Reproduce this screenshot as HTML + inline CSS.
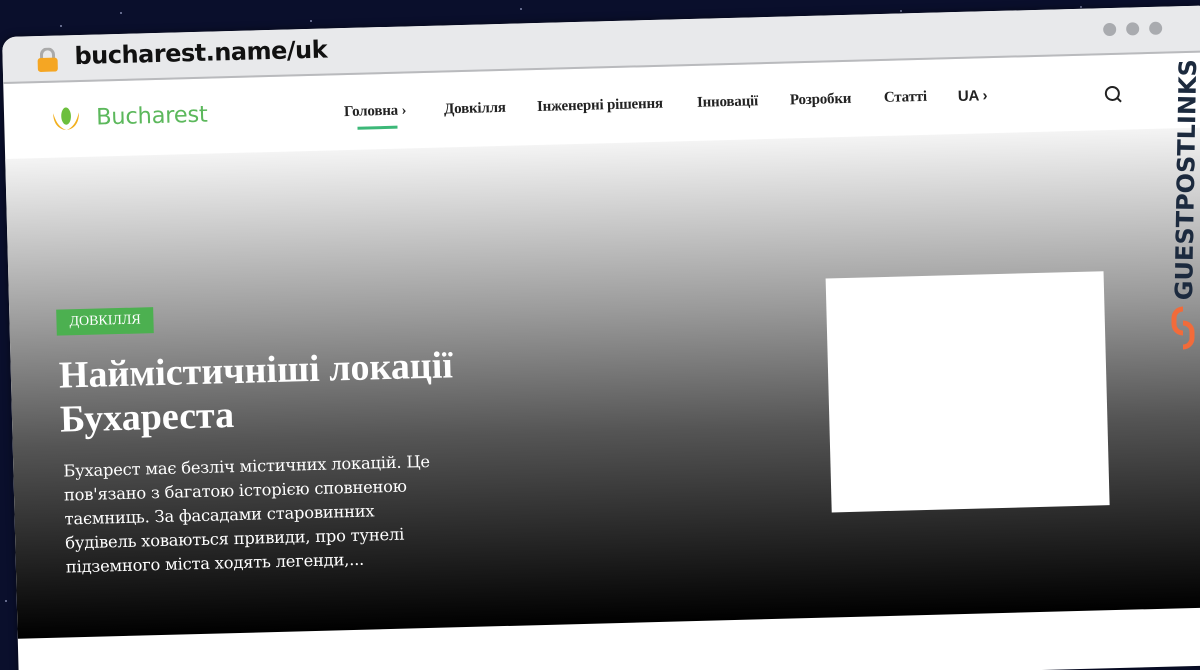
<!DOCTYPE html>
<html><head><meta charset="utf-8"><style>
*{margin:0;padding:0;box-sizing:border-box}
html,body{width:1200px;height:670px;overflow:hidden}
body{background:#0a0f2c;position:relative;font-family:"Liberation Sans",sans-serif}
.frame{position:absolute;left:0;top:0;width:1200px;height:670px;overflow:hidden}
.star{position:absolute;width:2px;height:2px;background:#cfd6ff;opacity:.6;border-radius:50%}
.win{position:absolute;left:2px;top:37px;width:1210px;height:660px;background:#fff;border-radius:14px;transform-origin:0 0;transform:rotate(-1.5deg);overflow:hidden;box-shadow:0 0 8px rgba(0,0,0,.5)}
.bar{height:47px;background:#e8e9eb;border-bottom:2px solid #b9babd;position:relative}
.lock{position:absolute;left:34px;top:12px;width:22px;height:24px}
.url{position:absolute;left:72px;top:7px;font-size:24px;font-weight:bold;color:#111;font-family:"DejaVu Sans",sans-serif;letter-spacing:-0.5px}
.dots{position:absolute;right:50px;top:15px}
.dots i{display:inline-block;width:13px;height:13px;border-radius:50%;background:#a9abaf;margin-left:10px}
.nav{height:75px;position:relative;font-family:"Liberation Serif",serif;font-weight:bold;font-size:15px;color:#222;letter-spacing:-0.2px}
.nav span{position:absolute;top:29px;white-space:nowrap}
.logo{position:absolute;left:92px;top:23px;font-family:"DejaVu Sans",sans-serif;font-weight:normal;font-size:22.5px;color:#5cb85c}
.hero{height:480px;background:linear-gradient(#f4f4f4 0%,#9a9a9a 35%,#555 60%,#000 100%);position:relative;color:#fff}
.badge{position:absolute;left:47px;top:152px;background:#4cb050;color:#fff;font-family:"Liberation Serif",serif;font-size:14px;padding:5px 13px}
.title{position:absolute;left:48px;top:196px;font-family:"Liberation Serif",serif;font-weight:bold;font-size:38px;line-height:44px}
.desc{position:absolute;left:50px;top:302px;font-family:"DejaVu Serif",serif;font-size:16.3px;line-height:24px;white-space:nowrap;letter-spacing:-0.2px}
.box{position:absolute;left:817px;top:141px;width:278px;height:234px;background:#fff}
.gpl{position:absolute;left:1170px;top:300px;transform-origin:0 0;transform:rotate(-89deg);font-family:"DejaVu Sans",sans-serif;font-weight:bold;font-size:24px;color:#1c2a3e;white-space:nowrap}
</style></head><body><div class="frame">
<div class="star" style="left:120px;top:12px"></div><div class="star" style="left:310px;top:20px"></div><div class="star" style="left:520px;top:8px"></div><div class="star" style="left:700px;top:25px"></div><div class="star" style="left:900px;top:10px"></div><div class="star" style="left:1080px;top:6px"></div><div class="star" style="left:60px;top:25px"></div><div class="star" style="left:430px;top:30px"></div><div class="star" style="left:5px;top:600px"></div><div class="star" style="left:1150px;top:18px"></div>
<div class="win">
 <div class="bar">
  <svg class="lock" viewBox="0 0 22 24"><path d="M5 11V7a6 6 0 0 1 12 0v4" fill="none" stroke="#aaa" stroke-width="3"/><rect x="1" y="10" width="20" height="14" rx="3" fill="#f5a623"/></svg>
  <div class="url">bucharest.name/uk</div>
  <div class="dots"><i></i><i></i><i></i></div>
 </div>
 <div class="nav">
  <svg style="position:absolute;left:48px;top:23px" width="28" height="28" viewBox="0 0 26 24"><path d="M1 6c0 9 4 15 12 16C5 19 3 12 1 6z M25 6c0 9-4 15-12 16 8-3 10-10 12-16z" fill="#f2b01e"/><ellipse cx="13" cy="9" rx="4.5" ry="8" fill="#6cbf3c"/></svg>
  <div class="logo">Bucharest</div>
  <span style="left:340px">Головна &#8250;</span>
  <div style="position:absolute;left:353px;top:52px;width:40px;height:3px;background:#3cb878"></div>
  <span style="left:440px">Довкілля</span>
  <span style="left:533px">Інженерні рішення</span>
  <span style="left:693px">Інновації</span>
  <span style="left:786px">Розробки</span>
  <span style="left:880px">Статті</span>
  <span style="left:954px;font-family:'Liberation Sans',sans-serif">UA &#8250;</span>
  <svg style="position:absolute;left:1100px;top:30px" width="20" height="20" viewBox="0 0 20 20"><circle cx="8.5" cy="8.5" r="6.5" fill="none" stroke="#222" stroke-width="2"/><path d="M13 13l4 4" stroke="#222" stroke-width="2"/></svg>
 </div>
 <div class="hero">
  <div class="badge">ДОВКІЛЛЯ</div>
  <div class="title">Наймістичніші локації<br>Бухареста</div>
  <div class="desc">Бухарест має безліч містичних локацій. Це<br>пов'язано з багатою історією сповненою<br>таємниць. За фасадами старовинних<br>будівель ховаються привиди, про тунелі<br>підземного міста ходять легенди,...</div>
  <div class="box"></div>
 </div>
</div>
<div class="gpl">GUESTPOSTLINKS</div>
<svg style="position:absolute;left:1170px;top:305px" width="26" height="46" viewBox="0 0 26 46"><path d="M13 4a9 9 0 0 0-9 9v6a9 9 0 0 0 9 9M13 18a9 9 0 0 1 9 9v6a9 9 0 0 1-9 9" fill="none" stroke="#f26b3a" stroke-width="5"/></svg>
</div></body></html>
